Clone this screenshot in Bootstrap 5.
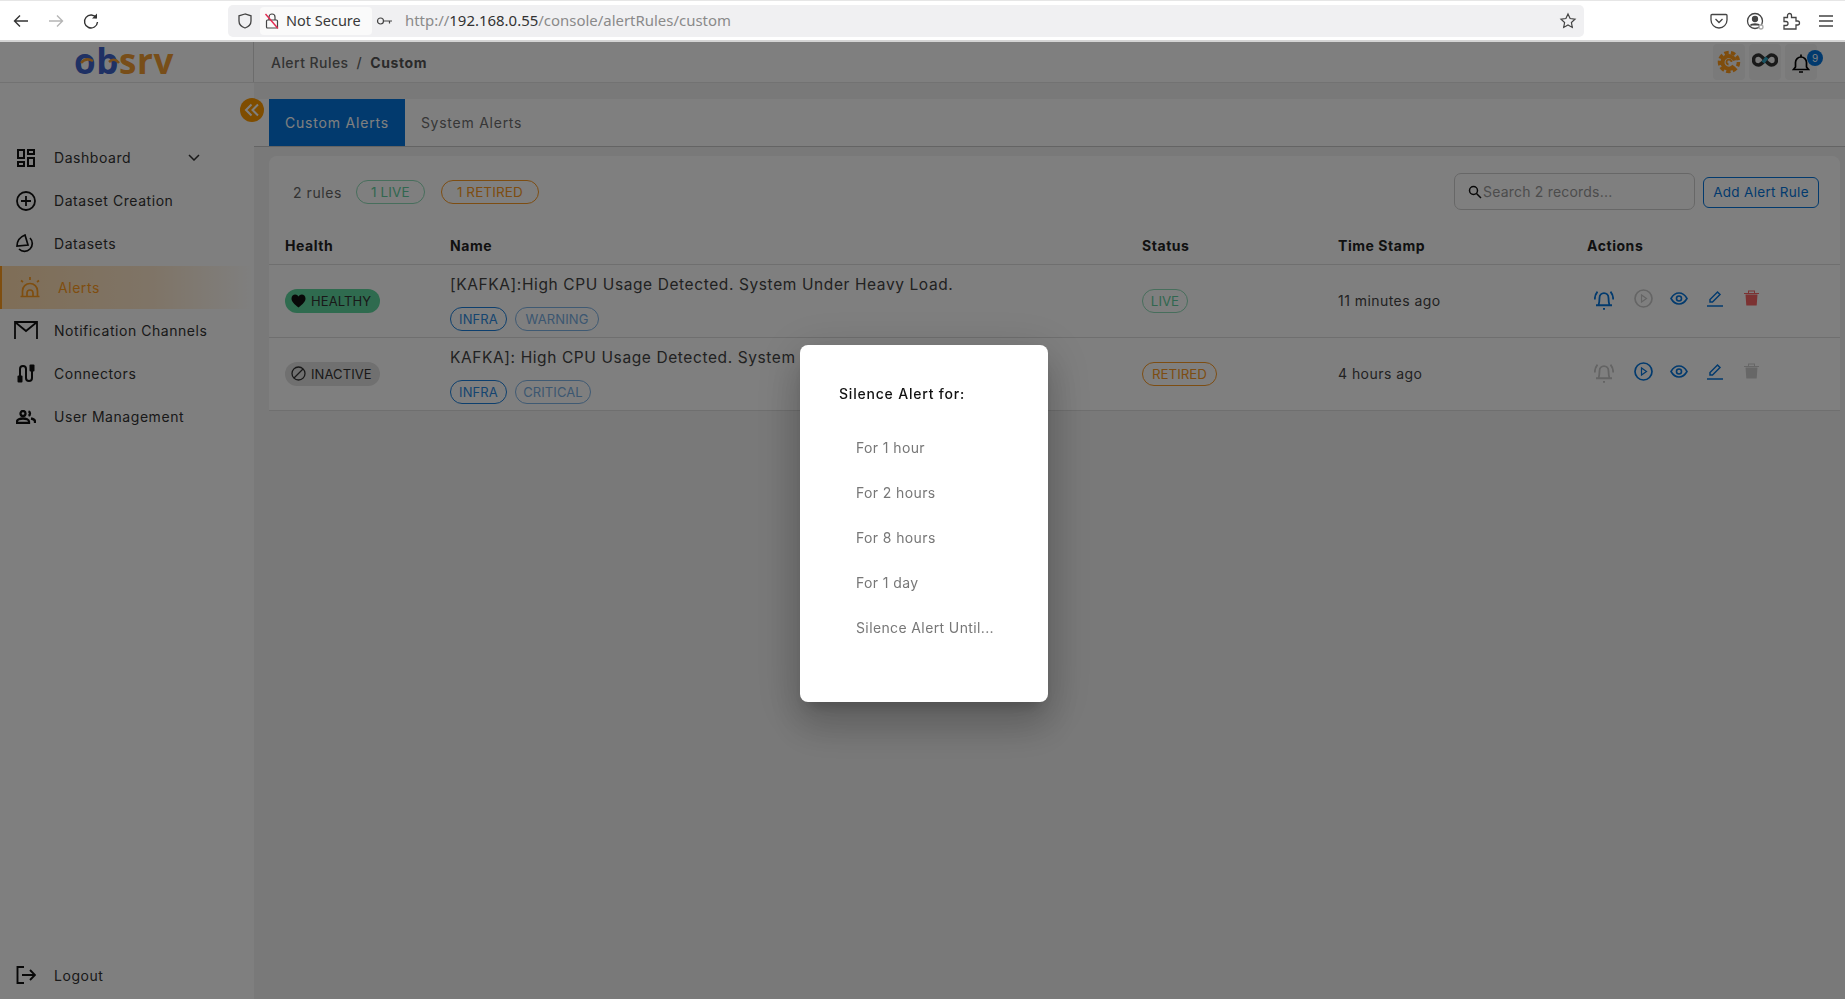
<!DOCTYPE html>
<html lang="en">
<head>
  <meta charset="UTF-8">
  <title>Alert Rules - Custom</title>
  <link href="https://cdn.jsdelivr.net/npm/bootstrap@5.3.3/dist/css/bootstrap.min.css" rel="stylesheet">
  <style>
    html, body { height: 100%; overflow: hidden; }
    body { font-family: Inter, "Liberation Sans", sans-serif; font-size: 14px; letter-spacing: .55px; color: #333; background: #f2f2f2; }

    /* browser toolbar */
    .fx-bar { height: 42px; background: #fff; border-top: 1px solid #e6e6e6; border-bottom: 2px solid #d4d4d4; font-family: "Noto Sans", sans-serif; letter-spacing: 0; }
    .fx-nav { width: 228px; padding-left: 12px; gap: 17px; }
    .fx-url { width: 1356px; height: 32px; background: #f0f0f2; border-radius: 5px; padding-left: 8px; padding-right: 7px; }
    .fx-pill { height: 28px; background: #fafafa; border-radius: 4px; width: 112px; margin-left: 6px; padding-left: 4px; gap: 6px; font-size: 14.5px; color: #3a3a3a; white-space: nowrap; }
    .fx-addr { font-size: 14.95px; color: #8a8a8a; margin-left: 11px; }
    .fx-addr b { font-weight: 400; color: #333; }
    .fx-tools { gap: 16px; margin-left: 125px; }

    /* app header */
    .app-head { height: 41px; background: #fff; border-bottom: 1px solid #e4e4e4; }
    .brand-cell { width: 254px; border-right: 1px solid #d9d9d9; padding-left: 74px; }
    .brand-word { font-family: "Open Sans", sans-serif; font-size: 35px; font-weight: 700; line-height: 38px; letter-spacing: .6px; margin-top: -3px; }
    .brand-o { color: #3e62c8; }
    .brand-s { color: #f09c32; }
    .brand-arcs { left: 0; top: 0; }
    .crumb-line { padding-left: 17px; font-size: 14px; color: #666; font-weight: 500; letter-spacing: .45px; }
    .crumb-line span { margin: 0 8px; }
    .crumb-line b { font-weight: 700; color: #555; letter-spacing: .6px; }
    .head-tile { width: 32px; height: 36px; background: #f4f4f4; border-radius: 4px; margin-left: 4px; }
    .head-tools { padding-right: 28px; }
    .bell-count { top: 6px; left: 22px; width: 16px; height: 16px; padding: 0; line-height: 16px; font-size: 10px; font-weight: 400; background: #0575dc; letter-spacing: 0; }

    /* sidebar */
    .side-rail { width: 254px; background: #fff; padding-top: 53px; flex-shrink: 0; }
    .rail-link { height: 43.2px; color: #333; padding-left: 54px; font-size: 14px; text-decoration: none; }
    .rail-icon { left: 0; top: 0; width: 52px; height: 43px; }
    .rail-on { color: #ff9c1e; padding-left: 56px; border-left: 2px solid #ff9c1e; background: linear-gradient(90deg, #ffdcae 0, #ffe9ce 60%, #fff 100%); }
    .rail-on .rail-icon { left: -2px; width: 60px; }
    .rail-caret { right: 54px; top: 18px; }
    .rail-end { margin-top: auto; margin-bottom: 2px; }
    .fold-btn { right: -10px; top: 15px; width: 24px; height: 24px; background: #ff9a00; z-index: 2; }

    /* main */
    .page-pane { padding-top: 16px; }
    .tab-strip { height: 48px; background: #fff; padding-left: 15px; border-bottom: 1px solid #c9c9c9; }
    .tab-item { height: 47px; padding: 0 16px; font-size: 14px; letter-spacing: .75px; color: #6e6e6e; border: 0; border-radius: 0; }
    .tab-item.active { background: #0475dc; color: #fff; letter-spacing: .8px; }
    .rule-panel { margin: 9px 5px 0 15px; background: #fff; border: 0; border-radius: 8px 8px 0 0; }
    .rule-tools { height: 72px; padding: 0 21px 0 24px; }
    .rule-count { color: #666; margin-right: 14px; }
    .soft-chip { height: 24px; border: 1px solid; border-radius: 12px; font-size: 13.5px; letter-spacing: .1px; line-height: 22px; padding: 0 13px; }
    .chip-live { color: #64cfa0; border-color: #8fdcb8; width: 69px; padding: 0; text-align: center; }
    .chip-retired { color: #fb9a24; border-color: #fb9a24; width: 98px; padding: 0; text-align: center; margin-left: 16px; }
    .find-box { width: 241px; height: 37px; border: 1px solid #cfcfcf; border-radius: 7px; padding-left: 13px; gap: 1px; margin-right: 8px; margin-top: -1px; }
    .find-box input { border: 0; outline: 0; padding: 0; width: 190px; font-size: 14px; letter-spacing: .2px; background: transparent; color: #333; }
    .find-box input::placeholder { color: #999; opacity: 1; }
    .add-btn { width: 116px; height: 31px; padding: 0; font-size: 13.5px; border-radius: 6px; letter-spacing: .3px; --bs-btn-color: #0475dc; --bs-btn-border-color: #0475dc; }
    .rule-grid { table-layout: fixed; --bs-table-border-color: #dedede; color: #333; }
    .rule-grid th { height: 36px; padding: 0 16px; vertical-align: middle; font-weight: 700; font-size: 14px; letter-spacing: .55px; color: #222; border-bottom-width: 1px; }
    .rule-grid td { height: 73px; padding: 0 16px; vertical-align: middle; color: #444; }
    .rule-grid .name-cell { vertical-align: top; padding-top: 9px; }
    .cw-health { width: 165px; } .cw-name { width: 692px; } .cw-status { width: 196px; } .cw-time { width: 249px; }
    .rule-title { font-size: 15.5px; line-height: 22px; letter-spacing: .6px; white-space: nowrap; }
    .tag-row { margin-top: 11px; gap: 8px; }
    .tag-pill { height: 24px; border: 1px solid #1b7fdc; color: #2d8ae0; border-radius: 12px; font-size: 13px; letter-spacing: .1px; line-height: 22px; text-align: center; }
    .tag-pill.tag-fade { border-color: #7fb4e6; color: #78aee2; }
    .tw-57 { width: 57px; } .tw-84 { width: 84px; } .tw-76 { width: 76px; }
    .health-pill { width: 95px; height: 24px; border-radius: 12px; font-size: 13px; letter-spacing: .1px; padding-left: 6px; gap: 5px; color: #333; }
    .pill-word { padding-top: 2px; }
    .hp-good { background: #5fd69e; }
    .hp-idle { background: #e0e0e0; }
    .state-pill { display: inline-block; height: 24px; border: 1px solid; border-radius: 12px; font-size: 13.3px; letter-spacing: 0; line-height: 22px; text-align: center; }
    .sp-live { width: 46px; color: #64cfa0; border-color: #8fdcb8; }
    .sp-retired { width: 75px; color: #fb9a24; border-color: #fb9a24; }
    .time-cell { letter-spacing: .45px; }
    .act-row { margin-left: -1px; }
    .act-slot { width: 36px; }
    .act-slot svg { margin-bottom: 5px; }
    .act-slot.act-bell { margin-right: 3px; }
    .act-slot.act-bell svg { margin-bottom: 0; }

    /* dim layer and dialog */
    .modal-backdrop.dim-layer { top: 42px; height: calc(100vh - 42px); }
    .silence-box { position: fixed; top: 345px; left: 800px; width: 248px; height: 357px; z-index: 1055; background: #fff; border: 0; border-radius: 8px; padding: 38px 0 0 39px; box-shadow: 0 11px 15px -7px rgba(0,0,0,.2), 0 24px 38px 3px rgba(0,0,0,.14), 0 9px 46px 8px rgba(0,0,0,.12); }
    .silence-title { font-size: 14px; line-height: 21px; color: #111; margin-bottom: 21px; font-weight: 500; letter-spacing: .8px; }
    .silence-opt { height: 45px; line-height: 45px; padding-left: 17px; color: #777; font-size: 14px; letter-spacing: .38px; white-space: nowrap; }
  </style>
</head>
<body class="d-flex flex-column">
  <!-- browser toolbar -->
  <div class="fx-bar d-flex align-items-center flex-shrink-0">
    <div class="fx-nav d-flex align-items-center">
      <svg width="18" height="18" viewBox="0 0 18 18" fill="none" stroke="#333" stroke-width="1.4"><path d="M16 9H2.5M8 3.5 2.5 9 8 14.5"/></svg>
      <svg width="18" height="18" viewBox="0 0 18 18" fill="none" stroke="#b5b5b5" stroke-width="1.4"><path d="M2 9h13.5M10 3.500 15.500 9 10 14.500"/></svg>
      <svg width="18" height="18" viewBox="0 0 18 18" fill="none" stroke="#333" stroke-width="1.4"><path d="M14.500 6A6.500 6.500 0 1 0 15.500 10"/><path d="M15 1.500V6.500H10" fill="#333" stroke="none"/></svg>
    </div>
    <div class="fx-url d-flex align-items-center">
      <svg width="18" height="18" viewBox="0 0 18 18" fill="none" stroke="#444" stroke-width="1.3"><path d="M9 2 3 3.800V9c0 3.500 3 6 6 7 3-1 6-3.500 6-7V3.800Z"/></svg>
      <div class="fx-pill d-flex align-items-center">
        <svg width="16" height="18" viewBox="0 0 16 18" fill="none" stroke="#444" stroke-width="1.2"><rect x="2.500" y="8" width="11" height="8" rx="1"/><path d="M5 8V5a3 3 0 0 1 6 0v3"/><path d="M1.500 2 14 16.500" stroke="#e22850" stroke-width="1.400"/></svg>
        <span>Not Secure</span>
      </div>
      <svg class="ms-1" width="18" height="12" viewBox="0 0 18 12" fill="none" stroke="#444" stroke-width="1.2"><circle cx="4.500" cy="6" r="3"/><path d="M7.500 6H16M13.500 6v2.500"/></svg>
      <span class="fx-addr">http://<b>192.168.0.55</b>/console/alertRules/custom</span>
      <svg class="ms-auto" width="18" height="18" viewBox="0 0 18 18" fill="none" stroke="#444" stroke-width="1.2"><path d="m9 2 2.100 4.500 4.900.6-3.600 3.400.9 4.900L9 13l-4.300 2.400.9-4.900L2 7.100l4.900-.6Z"/></svg>
    </div>
    <div class="fx-tools d-flex align-items-center">
      <svg width="20" height="18" viewBox="0 0 20 18" fill="none" stroke="#444" stroke-width="1.3"><path d="M3 2.500h14a1 1 0 0 1 1 1V8a8 8 0 0 1-16 0V3.500a1 1 0 0 1 1-1Z"/><path d="m6.500 7 3.500 3.500L13.500 7"/></svg>
      <svg width="20" height="20" viewBox="0 0 20 20" fill="none" stroke="#444" stroke-width="1.3"><circle cx="10" cy="10" r="7.500"/><circle cx="10" cy="8" r="2.500" fill="#444"/><path d="M5.500 14.500c1-2 8-2 9 0" fill="#444"/><circle cx="16" cy="16" r="2" fill="#fff" stroke="#aaa"/></svg>
      <svg width="20" height="20" viewBox="0 0 20 20" fill="none" stroke="#444" stroke-width="1.3"><path d="M3 6.500h3.500V4.500a2 2 0 0 1 4 0v2H15v3.500h1.500v0a2 2 0 0 1 0 4H15v4H3v-3.500h2a2 2 0 0 0 0-4H3Z"/></svg>
      <svg width="18" height="16" viewBox="0 0 18 16" fill="none" stroke="#444" stroke-width="1.4"><path d="M2 3h14M2 8h14M2 13h14"/></svg>
    </div>
  </div>

  <!-- app header -->
  <header class="app-head d-flex align-items-center flex-shrink-0">
    <div class="brand-cell h-100 d-flex align-items-center position-relative">
      <div class="brand-word"><span class="brand-o">ob</span><span class="brand-s">srv</span></div>
      <svg class="brand-arcs position-absolute" width="130" height="40" viewBox="0 0 130 40" fill="none" stroke="#f09c32" stroke-width="2.500"><path d="M81 21Q86 15 93 19M109 20Q114 15 119 21"/></svg>
    </div>
    <div class="crumb-line flex-grow-1">Alert Rules<span>/</span><b>Custom</b></div>
    <div class="head-tools d-flex align-items-center">
      <div class="head-tile d-flex align-items-center justify-content-center">
        <svg width="24" height="24" viewBox="0 0 24 24" fill="none" stroke="#ff9a1a"><circle cx="12" cy="12" r="9.500" stroke-width="3.500" stroke-dasharray="4.400 2.230"/><path d="M17.800 10.500A6.300 6.300 0 1 0 17 16" stroke-width="4"/><path d="M14.500 12a2.500 2.500 0 1 0-3 2.500" stroke-width="1.800"/></svg>
      </div>
      <div class="head-tile d-flex align-items-center justify-content-center pb-1">
        <svg width="26" height="14" viewBox="0 0 26 14" fill="none" stroke-width="3.600"><path stroke="#333" d="M13 7C10 3.500 8.500 2 6.500 2a5 5 0 0 0 0 10c2 0 3.500-1.500 6.500-5s4.500-5 6.500-5a5 5 0 0 1 0 10c-2 0-3.500-1.500-6.500-5Z"/><path stroke="#2ea6c4" d="M11 9.500 15 4.500"/></svg>
      </div>
      <div class="head-tile d-flex align-items-center justify-content-center position-relative pt-1">
        <svg width="18" height="20" viewBox="0 0 18 20" fill="none" stroke="#000" stroke-width="1.700"><path d="M1.500 15.500h15l-2-2.500V8.500a5.500 5.500 0 0 0-11 0V13Z"/><path d="M9 .5v2.500M7 18h4"/></svg>
        <span class="badge rounded-pill position-absolute bell-count">9</span>
      </div>
    </div>
  </header>

  <div class="d-flex flex-grow-1 overflow-hidden">
    <!-- sidebar -->
    <aside class="side-rail d-flex flex-column position-relative">
      <span class="fold-btn position-absolute rounded-circle d-flex align-items-center justify-content-center">
        <svg width="16" height="14" viewBox="0 0 16 14" fill="none" stroke="#fff" stroke-width="2"><path d="M7.500 1.500 2 7l5.500 5.500M14 1.500 8.500 7l5.500 5.500"/></svg>
      </span>
      <a class="rail-link d-flex align-items-center position-relative" href="#">
        <span class="rail-icon position-absolute d-flex align-items-center justify-content-center"><svg width="18" height="18" viewBox="0 0 18 18" fill="none" stroke="#111" stroke-width="2"><rect x="1" y="1" width="6" height="8"/><rect x="1" y="13" width="6" height="4"/><rect x="11" y="1" width="6" height="4"/><rect x="11" y="9" width="6" height="8"/></svg></span>
        Dashboard
        <svg class="rail-caret position-absolute" width="12" height="7" viewBox="0 0 12 7" fill="none" stroke="#333" stroke-width="1.500"><path d="m1 1 5 5 5-5"/></svg>
      </a>
      <a class="rail-link d-flex align-items-center position-relative" href="#">
        <span class="rail-icon position-absolute d-flex align-items-center justify-content-center"><svg width="20" height="20" viewBox="0 0 20 20" fill="none" stroke="#111" stroke-width="1.800"><circle cx="10" cy="10" r="9"/><path d="M10 5v10M5 10h10"/></svg></span>
        Dataset Creation
      </a>
      <a class="rail-link d-flex align-items-center position-relative" href="#">
        <span class="rail-icon position-absolute d-flex align-items-center justify-content-center"><svg width="20" height="20" viewBox="0 0 20 20" fill="none" stroke="#111" stroke-width="1.700"><path d="M9 1 12 11 1 12C1 7 4 3 9 1Z"/><path d="M14 4A7.700 7.700 0 1 1 3 15"/></svg></span>
        Datasets
      </a>
      <a class="rail-link rail-on d-flex align-items-center position-relative" href="#">
        <span class="rail-icon position-absolute d-flex align-items-center justify-content-center"><svg width="22" height="22" viewBox="0 0 22 22" fill="none" stroke="#ff9c1e" stroke-width="1.700"><path d="M3.500 20.500V15a7.500 7.500 0 0 1 15 0v5.500M1.500 20.500h19M8 20.500v-3.500a3 3 0 0 1 6 0v3.500M11 1v3M2 4.500l2 1.500M20 4.500 18 6"/></svg></span>
        Alerts
      </a>
      <a class="rail-link d-flex align-items-center position-relative" href="#">
        <span class="rail-icon position-absolute d-flex align-items-center justify-content-center"><svg width="24" height="18" viewBox="0 0 24 18" fill="none" stroke="#111" stroke-width="1.800"><path d="M1 18V1h22v17M1 1l11 9 11-9"/></svg></span>
        Notification Channels
      </a>
      <a class="rail-link d-flex align-items-center position-relative" href="#">
        <span class="rail-icon position-absolute d-flex align-items-center justify-content-center"><svg width="18" height="19" viewBox="0 0 18 19" fill="#111" stroke="#111" stroke-width="2"><path fill="none" d="M3 13V5a3 3 0 0 1 6 0v9a3 3 0 0 0 6 0V5"/><rect x=".5" y="11.500" width="5" height="7" rx="1" stroke="none"/><rect x="12.500" y=".5" width="5" height="7" rx="1" stroke="none"/></svg></span>
        Connectors
      </a>
      <a class="rail-link d-flex align-items-center position-relative" href="#">
        <span class="rail-icon position-absolute d-flex align-items-center justify-content-center"><svg width="20" height="14" viewBox="0 0 20 14" fill="none" stroke="#111" stroke-width="2.300"><circle cx="7" cy="3.500" r="2.500"/><path d="M1 13v-1.500c0-1.800 3-3 6-3s6 1.200 6 3V13Z"/><path d="M12.500 1.200a2.500 2.500 0 0 1 0 4.600M15 8.500c2 .4 4 1.300 4 3V13"/></svg></span>
        User Management
      </a>
      <a class="rail-link rail-end d-flex align-items-center position-relative" href="#">
        <span class="rail-icon position-absolute d-flex align-items-center justify-content-center"><svg width="20" height="18" viewBox="0 0 20 18" fill="none" stroke="#111" stroke-width="1.900"><path d="M8 1H1.500v16H8M6 9h13M14 4l5 5-5 5"/></svg></span>
        Logout
      </a>
    </aside>

    <!-- page -->
    <main class="page-pane flex-grow-1 overflow-hidden">
      <ul class="nav tab-strip">
        <li class="nav-item"><a class="nav-link tab-item active d-flex align-items-center" href="#">Custom Alerts</a></li>
        <li class="nav-item"><a class="nav-link tab-item d-flex align-items-center" href="#">System Alerts</a></li>
      </ul>

      <div class="card rule-panel">
        <div class="rule-tools d-flex align-items-center">
          <span class="rule-count">2 rules</span>
          <span class="soft-chip chip-live">1 LIVE</span>
          <span class="soft-chip chip-retired">1 RETIRED</span>
          <div class="find-box d-flex align-items-center ms-auto">
            <svg width="14" height="14" viewBox="0 0 14 14" fill="none" stroke="#111" stroke-width="1.500"><circle cx="5.500" cy="5.500" r="4"/><path d="m8.500 8.500 4.500 4.500"/></svg>
            <input type="text" placeholder="Search 2 records...">
          </div>
          <button class="btn btn-outline-primary add-btn" type="button">Add Alert Rule</button>
        </div>

        <table class="table mb-0 rule-grid">
          <colgroup><col class="cw-health"><col class="cw-name"><col class="cw-status"><col class="cw-time"><col></colgroup>
          <thead>
            <tr><th>Health</th><th>Name</th><th>Status</th><th>Time Stamp</th><th>Actions</th></tr>
          </thead>
          <tbody>
            <tr>
              <td><div class="health-pill hp-good d-flex align-items-center"><svg width="15" height="14" viewBox="0 0 15 14" fill="#111"><path d="M7.500 13.500C3 9.800.5 7.500.5 4.400.5 2 2.300.5 4.200.5c1.400 0 2.600.8 3.300 2 .7-1.200 1.900-2 3.300-2 1.900 0 3.700 1.500 3.700 3.900 0 3.100-2.500 5.400-7 9.100Z"/></svg><span class="pill-word">HEALTHY</span></div></td>
              <td class="name-cell">
                <div class="rule-title">[KAFKA]:High CPU Usage Detected. System Under Heavy Load.</div>
                <div class="tag-row d-flex"><span class="tag-pill tw-57">INFRA</span><span class="tag-pill tag-fade tw-84">WARNING</span></div>
              </td>
              <td><span class="state-pill sp-live">LIVE</span></td>
              <td class="time-cell">11 minutes ago</td>
              <td>
                <div class="act-row d-flex align-items-center">
                  <span class="act-slot act-bell d-flex justify-content-center"><svg width="20" height="21" viewBox="0 0 20 20" preserveAspectRatio="none" fill="none" stroke="#0475dc" stroke-width="1.800"><path d="M2 14.500h16M4.500 14.500C5.500 11 5.500 9 5.500 7.500a4.500 4.500 0 0 1 9 0c0 1.500 0 3.500 1 7M9 18h2M.8 9Q.8 4.500 3.500 1.500M19.200 9q0-4.500-2.700-7.500"/></svg></span>
                  <span class="act-slot d-flex justify-content-center"><svg width="19" height="19" viewBox="0 0 19 19" fill="none" stroke="#cacaca" stroke-width="1.700"><circle cx="9.500" cy="9.500" r="8.500"/><path d="M7.500 6v7l5-3.500Z" stroke-width="1.200"/></svg></span>
                  <span class="act-slot d-flex justify-content-center"><svg width="18" height="13" viewBox="0 0 18 13" fill="none" stroke="#0475dc" stroke-width="1.600"><path d="M1 6.500C3 3 6 1 9 1s6 2 8 5.500c-2 3.500-5 5.500-8 5.500s-6-2-8-5.500Z"/><circle cx="9" cy="6.500" r="2.500"/></svg></span>
                  <span class="act-slot d-flex justify-content-center"><svg width="17" height="17" viewBox="0 0 17 17" fill="none" stroke="#0475dc" stroke-width="1.500"><path d="M3 12V9.500L10.500 2l2.500 2.500L5.500 12ZM0 16h16"/></svg></span>
                  <span class="act-slot d-flex justify-content-center"><svg width="15" height="16" viewBox="0 0 15 16" fill="#f86464"><path d="M1.500 4.500h12l-.8 11h-10.400ZM0 3h15v1H0ZM4 .5h7V3h-1V1.500H5V3H4Z"/></svg></span>
                </div>
              </td>
            </tr>
            <tr>
              <td><div class="health-pill hp-idle d-flex align-items-center"><svg width="15" height="15" viewBox="0 0 15 15" fill="none" stroke="#333" stroke-width="1.300"><circle cx="7.500" cy="7.500" r="6.500"/><path d="m3 12 9-9"/></svg><span class="pill-word">INACTIVE</span></div></td>
              <td class="name-cell">
                <div class="rule-title">KAFKA]: High CPU Usage Detected. System Under Heavy Load.</div>
                <div class="tag-row d-flex"><span class="tag-pill tw-57">INFRA</span><span class="tag-pill tag-fade tw-76">CRITICAL</span></div>
              </td>
              <td><span class="state-pill sp-retired">RETIRED</span></td>
              <td class="time-cell">4 hours ago</td>
              <td>
                <div class="act-row d-flex align-items-center">
                  <span class="act-slot act-bell d-flex justify-content-center"><svg width="20" height="21" viewBox="0 0 20 20" preserveAspectRatio="none" fill="none" stroke="#c8c8c8" stroke-width="1.800"><path d="M2 14.500h16M4.500 14.500C5.500 11 5.500 9 5.500 7.500a4.500 4.500 0 0 1 9 0c0 1.500 0 3.500 1 7M9 18h2M.8 9Q.8 4.500 3.500 1.500M19.200 9q0-4.500-2.700-7.500"/></svg></span>
                  <span class="act-slot d-flex justify-content-center"><svg width="19" height="19" viewBox="0 0 19 19" fill="none" stroke="#0475dc" stroke-width="1.700"><circle cx="9.500" cy="9.500" r="8.500"/><path d="M7.500 6v7l5-3.500Z" stroke-width="1.200"/></svg></span>
                  <span class="act-slot d-flex justify-content-center"><svg width="18" height="13" viewBox="0 0 18 13" fill="none" stroke="#0475dc" stroke-width="1.600"><path d="M1 6.500C3 3 6 1 9 1s6 2 8 5.500c-2 3.500-5 5.500-8 5.500s-6-2-8-5.500Z"/><circle cx="9" cy="6.500" r="2.500"/></svg></span>
                  <span class="act-slot d-flex justify-content-center"><svg width="17" height="17" viewBox="0 0 17 17" fill="none" stroke="#0475dc" stroke-width="1.500"><path d="M3 12V9.500L10.500 2l2.500 2.500L5.500 12ZM0 16h16"/></svg></span>
                  <span class="act-slot d-flex justify-content-center"><svg width="15" height="16" viewBox="0 0 15 16" fill="#cfcfcf"><path d="M1.500 4.500h12l-.8 11h-10.400ZM0 3h15v1H0ZM4 .5h7V3h-1V1.500H5V3H4Z"/></svg></span>
                </div>
              </td>
            </tr>
          </tbody>
        </table>
      </div>
    </main>
  </div>

  <!-- silence dialog, open over the page -->
  <div class="modal-backdrop show dim-layer"></div>
  <div class="modal-content silence-box">
    <div class="silence-title">Silence Alert for:</div>
    <div class="silence-opt">For 1 hour</div>
    <div class="silence-opt">For 2 hours</div>
    <div class="silence-opt">For 8 hours</div>
    <div class="silence-opt">For 1 day</div>
    <div class="silence-opt">Silence Alert Until...</div>
  </div>

  <script src="https://cdn.jsdelivr.net/npm/bootstrap@5.3.3/dist/js/bootstrap.bundle.min.js"></script>
</body>
</html>
